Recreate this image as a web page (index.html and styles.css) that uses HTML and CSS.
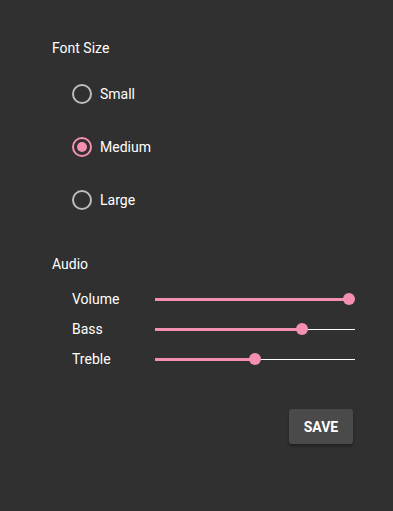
FILE: index.html
```html
<!DOCTYPE html>
<html lang="en">
<head>
    <meta charset="UTF-8">
    <meta name="viewport" content="width=device-width, initial-scale=1.0">
    <title>Settings</title>
    <link rel="stylesheet" href="styles.css">
</head>
<body>
    <div class="panel">
        <div class="section-title">Font Size</div>
        <div class="radio-list">
            <div class="radio-row">
                <span class="radio"></span>
                <span class="radio-label">Small</span>
            </div>
            <div class="radio-row">
                <span class="radio checked"></span>
                <span class="radio-label">Medium</span>
            </div>
            <div class="radio-row">
                <span class="radio"></span>
                <span class="radio-label">Large</span>
            </div>
        </div>

        <div class="section-title audio-title">Audio</div>
        <div class="slider-list">
            <div class="slider-row">
                <span class="slider-label">Volume</span>
                <div class="track" style="--v: 1">
                    <div class="rail"></div>
                    <div class="fill"></div>
                    <div class="thumb"></div>
                </div>
            </div>
            <div class="slider-row">
                <span class="slider-label">Bass</span>
                <div class="track" style="--v: 0.75">
                    <div class="rail"></div>
                    <div class="fill"></div>
                    <div class="thumb"></div>
                </div>
            </div>
            <div class="slider-row">
                <span class="slider-label">Treble</span>
                <div class="track" style="--v: 0.5">
                    <div class="rail"></div>
                    <div class="fill"></div>
                    <div class="thumb"></div>
                </div>
            </div>
        </div>

        <div class="actions">
            <button type="button" class="btn-save">SAVE</button>
        </div>
    </div>
</body>
</html>
```

FILE: styles.css
```css
html, body {
    margin: 0;
    height: 100%;
    background-color: #303030;
}
body {
    font-family: Roboto, "Noto Sans", sans-serif;
    font-size: 14px;
    color: #fff;
}
.panel {
    padding: 39px 38px 0 52px;
}
.section-title {
    line-height: 19px;
}
.audio-title {
    margin-top: 29px;
}
.radio-list {
    padding: 9px 0 0 20px;
}
.radio-row {
    display: flex;
    align-items: center;
    height: 53px;
}
.radio {
    box-sizing: border-box;
    width: 20px;
    height: 20px;
    border: 2px solid #bdbdbd;
    border-radius: 50%;
    display: flex;
    align-items: center;
    justify-content: center;
}
.radio.checked {
    border-color: #f48fb1;
}
.radio.checked::after {
    content: "";
    width: 10px;
    height: 10px;
    border-radius: 50%;
    background-color: #f48fb1;
}
.radio-label {
    margin-left: 8px;
}
.slider-list {
    margin-top: 10px;
    padding-left: 20px;
}
.slider-row {
    display: flex;
    align-items: center;
    height: 30px;
}
.slider-label {
    width: 83px;
}
.track {
    position: relative;
    flex: 1;
    height: 12px;
}
.rail {
    position: absolute;
    left: 0;
    right: 0;
    top: 6px;
    height: 1px;
    background-color: #fff;
}
.fill {
    position: absolute;
    left: 0;
    top: 5px;
    height: 3px;
    width: calc(6px + (100% - 12px) * var(--v));
    background-color: #f48fb1;
}
.thumb {
    position: absolute;
    top: 0;
    left: calc((100% - 12px) * var(--v));
    width: 12px;
    height: 12px;
    border-radius: 50%;
    background-color: #f48fb1;
}
.actions {
    display: flex;
    justify-content: flex-end;
    margin-top: 35px;
    padding-right: 2px;
}
.btn-save {
    width: 64px;
    height: 35px;
    border: none;
    border-radius: 3px;
    background-color: #4a4a4a;
    color: #fff;
    font-family: Roboto, "Noto Sans", sans-serif;
    font-size: 14px;
    font-weight: bold;
    box-shadow: 0 2px 3px rgba(0,0,0,0.35);
    cursor: pointer;
}
```
